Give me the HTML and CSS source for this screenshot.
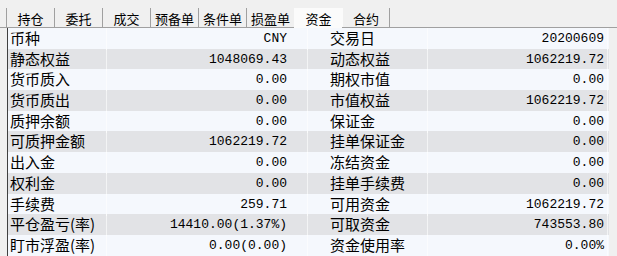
FILE: index.html
```html
<!DOCTYPE html>
<html lang="zh-CN">
<head>
    <meta charset="UTF-8">
    <title>资金</title>
    <link rel="stylesheet" href="styles.css">
</head>
<body>
    <div class="tab-bar">
        <div class="tab">持仓</div>
        <div class="tab">委托</div>
        <div class="tab">成交</div>
        <div class="tab">预备单</div>
        <div class="tab">条件单</div>
        <div class="tab">损盈单</div>
        <div class="tab active">资金</div>
        <div class="tab">合约</div>
    </div>

    <div class="sheet">
        <div class="row"><span class="label">币种</span><span class="value">CNY</span><span class="label2">交易日</span><span class="value">20200609</span></div>
        <div class="row"><span class="label">静态权益</span><span class="value">1048069.43</span><span class="label2">动态权益</span><span class="value">1062219.72</span></div>
        <div class="row"><span class="label">货币质入</span><span class="value">0.00</span><span class="label2">期权市值</span><span class="value">0.00</span></div>
        <div class="row"><span class="label">货币质出</span><span class="value">0.00</span><span class="label2">市值权益</span><span class="value">1062219.72</span></div>
        <div class="row"><span class="label">质押余额</span><span class="value">0.00</span><span class="label2">保证金</span><span class="value">0.00</span></div>
        <div class="row"><span class="label">可质押金额</span><span class="value">1062219.72</span><span class="label2">挂单保证金</span><span class="value">0.00</span></div>
        <div class="row"><span class="label">出入金</span><span class="value">0.00</span><span class="label2">冻结资金</span><span class="value">0.00</span></div>
        <div class="row"><span class="label">权利金</span><span class="value">0.00</span><span class="label2">挂单手续费</span><span class="value">0.00</span></div>
        <div class="row"><span class="label">手续费</span><span class="value">259.71</span><span class="label2">可用资金</span><span class="value">1062219.72</span></div>
        <div class="row"><span class="label">平仓盈亏(率)</span><span class="value">14410.00(1.37%)</span><span class="label2">可取资金</span><span class="value">743553.80</span></div>
        <div class="row"><span class="label">盯市浮盈(率)</span><span class="value">0.00(0.00)</span><span class="label2">资金使用率</span><span class="value">0.00%</span></div>
    </div>
</body>
</html>
```

FILE: styles.css
```css
body {
    margin: 0;
    background-color: #f0f0f0;
    color: black;
    font-family: "Noto Sans CJK SC", "Liberation Sans", sans-serif;
    height: 256px;
    overflow: hidden;
}

/* tab strip */
.tab-bar {
    display: flex;
    height: 19px;
    padding-top: 8px;
    padding-left: 6px;
    border-bottom: 1px solid #a0a0a0;
}
.tab {
    width: 48px;
    height: 19px;
    border-left: 1px solid #a0a0a0;
    font-size: 13px;
    line-height: 21px;
    text-align: center;
    box-sizing: border-box;
}
.tab:last-child {
    border-right: 1px solid #a0a0a0;
}
.tab.active {
    background-color: #fbfbfb;
    height: 20px;
    border-left-color: #fbfbfb;
    position: relative;
    z-index: 1;
}
.tab.active + .tab {
    border-left-color: #fbfbfb;
}

/* fund sheet */
.sheet {
    margin-left: 7px;
    width: 601px;
    border-left: 1px solid #404040;
}
.row {
    display: grid;
    grid-template-columns: 99px 201px 120px 180px;
    height: 20.7px;
    line-height: 19px;
    background-color: #f5f8fd;
}
.row:nth-child(even) {
    background-color: #e2e3e6;
}
.row span {
    border-right: 1px solid rgba(255, 255, 255, 0.6);
    white-space: nowrap;
}
.label, .label2 {
    font-size: 15px;
}
.label {
    padding-left: 2px;
}
.label2 {
    padding-left: 22px;
}
.value {
    font-family: "Liberation Mono", monospace;
    font-size: 13px;
    line-height: 22px;
    text-align: right;
    padding-right: 20px;
}
.label2 + .value {
    padding-right: 3px;
}
```
